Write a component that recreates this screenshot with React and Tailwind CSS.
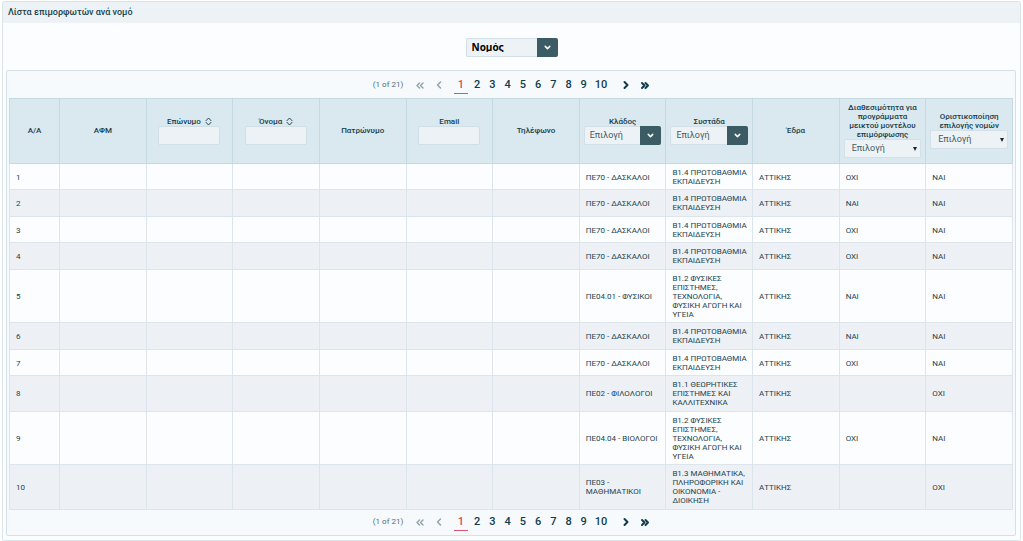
import { ChevronDown, ChevronLeft, ChevronRight, ChevronsLeft, ChevronsRight } from 'lucide-react';

const PRIMARY = 'Β1.4 ΠΡΩΤΟΒΑΘΜΙΑ ΕΚΠΑΙΔΕΥΣΗ';
const SCIENCE = 'Β1.2 ΦΥΣΙΚΕΣ ΕΠΙΣΤΗΜΕΣ, ΤΕΧΝΟΛΟΓΙΑ, ΦΥΣΙΚΗ ΑΓΩΓΗ ΚΑΙ ΥΓΕΙΑ';

const rows = [
  { branch: 'ΠΕ70 - ΔΑΣΚΑΛΟΙ',   cluster: PRIMARY, blended: 'ΟΧΙ', final: 'ΝΑΙ' },
  { branch: 'ΠΕ70 - ΔΑΣΚΑΛΟΙ',   cluster: PRIMARY, blended: 'ΝΑΙ', final: 'ΝΑΙ' },
  { branch: 'ΠΕ70 - ΔΑΣΚΑΛΟΙ',   cluster: PRIMARY, blended: 'ΟΧΙ', final: 'ΝΑΙ' },
  { branch: 'ΠΕ70 - ΔΑΣΚΑΛΟΙ',   cluster: PRIMARY, blended: 'ΟΧΙ', final: 'ΝΑΙ' },
  { branch: 'ΠΕ04.01 - ΦΥΣΙΚΟΙ', cluster: SCIENCE, blended: 'ΝΑΙ', final: 'ΝΑΙ' },
  { branch: 'ΠΕ70 - ΔΑΣΚΑΛΟΙ',   cluster: PRIMARY, blended: 'ΝΑΙ', final: 'ΝΑΙ' },
  { branch: 'ΠΕ70 - ΔΑΣΚΑΛΟΙ',   cluster: PRIMARY, blended: 'ΟΧΙ', final: 'ΝΑΙ' },
  { branch: 'ΠΕ02 - ΦΙΛΟΛΟΓΟΙ',  cluster: 'Β1.1 ΘΕΩΡΗΤΙΚΕΣ ΕΠΙΣΤΗΜΕΣ ΚΑΙ ΚΑΛΛΙΤΕΧΝΙΚΑ', blended: '', final: 'ΟΧΙ' },
  { branch: 'ΠΕ04.04 - ΒΙΟΛΟΓΟΙ', cluster: SCIENCE, blended: 'ΟΧΙ', final: 'ΝΑΙ' },
  { branch: 'ΠΕ03 - ΜΑΘΗΜΑΤΙΚΟΙ', cluster: 'Β1.3 ΜΑΘΗΜΑΤΙΚΑ, ΠΛΗΡΟΦΟΡΙΚΗ ΚΑΙ ΟΙΚΟΝΟΜΙΑ - ΔΙΟΙΚΗΣΗ', blended: '', final: 'ΟΧΙ' },
];

const columns = [
  { id: 'aa',       label: 'Α/Α' },
  { id: 'afm',      label: 'ΑΦΜ' },
  { id: 'surname',  label: 'Επώνυμο', filter: 'text', sortable: true },
  { id: 'name',     label: 'Όνομα', filter: 'text', sortable: true },
  { id: 'father',   label: 'Πατρώνυμο' },
  { id: 'email',    label: 'Email', filter: 'text' },
  { id: 'phone',    label: 'Τηλέφωνο' },
  { id: 'branch',   label: 'Κλάδος', filter: 'menu' },
  { id: 'cluster',  label: 'Συστάδα', filter: 'menu' },
  { id: 'seat',     label: 'Έδρα' },
  { id: 'blended',  label: 'Διαθεσιμότητα για προγράμματα μεικτού μοντέλου επιμόρφωσης', filter: 'select' },
  { id: 'final',    label: 'Οριστικοποίηση επιλογής νομών', filter: 'select' },
];

// ── Menu with dark trigger ────────────────────────────────────────────────────
function MenuSelect({ id, label, ariaLabel, className }) {
  return (
    <div className="flex h-[19px] w-full">
      <select
        id={id}
        aria-label={ariaLabel}
        className={`min-w-0 flex-1 appearance-none rounded-l-xs border border-r-0 border-[#d3dfe7] bg-[#edf2f6] pl-[5px] ${className}`}
      >
        <option>{label}</option>
      </select>
      <span className="pointer-events-none flex w-[21px] items-center justify-center rounded-r-xs bg-[#3c5c65] text-white">
        <ChevronDown size={9} strokeWidth={4} />
      </span>
    </div>
  );
}

// ── Native style select ───────────────────────────────────────────────────────
function PlainSelect({ id }) {
  return (
    <div className="grid h-[19px] w-full items-center">
      <select
        id={id}
        className="col-start-1 row-start-1 h-full w-full appearance-none rounded-xs border border-[#d3e0e8] bg-[#edf2f6] pl-[7px] text-[9px] font-normal text-[#3f5d67]"
      >
        <option>Επιλογή</option>
      </select>
      <svg viewBox="0 0 4 4" className="pointer-events-none col-start-1 row-start-1 mr-1 size-1 justify-self-end">
        <path d="M0 0h4L2 4z" fill="#16282e" />
      </svg>
    </div>
  );
}

// ── Sort icon ─────────────────────────────────────────────────────────────────
function SortIcon() {
  return (
    <svg viewBox="0 0 8 10" className="h-[9px] w-[7px]" fill="none" stroke="#21454f" strokeWidth="1.1">
      <path d="M0.8 4.4 4 1l3.2 3.4M0.8 5.6 4 9l3.2-3.4" />
    </svg>
  );
}

// ── Header cell ───────────────────────────────────────────────────────────────
function HeaderCell({ id, label, filter, sortable }) {
  const fieldId = `filter-${id}`;
  return (
    <th className="border border-[#c5d9e2] px-1 pt-1 pb-[5px] align-middle font-medium">
      {filter ? (
        <div className="flex flex-col items-center">
          <div className="flex items-center justify-center gap-1">
            <label htmlFor={fieldId}>{label}</label>
            {sortable && (
              <button type="button" aria-label={`Ταξινόμηση ${label}`}><SortIcon /></button>
            )}
          </div>
          {filter === 'text' && (
            <input id={fieldId} type="text" className="h-[19px] w-[62px] rounded-xs border border-[#d0dee6] bg-[#edf2f6] px-1" />
          )}
          {filter === 'menu' && <MenuSelect id={fieldId} label="Επιλογή" className="text-[9px] font-normal text-[#3f5d67]" />}
          {filter === 'select' && <PlainSelect id={fieldId} />}
        </div>
      ) : label}
    </th>
  );
}

// ── Paginator ─────────────────────────────────────────────────────────────────
function Paginator({ className }) {
  return (
    <nav aria-label="Σελίδες" className={`flex justify-center pl-[5px] text-[11px] leading-4 font-medium text-[#123c4a] ${className}`}>
      <span className="flex w-6 justify-center text-[8px] font-normal whitespace-nowrap text-[#526b75]">
        (1 of 21)
      </span>
      <button type="button" disabled aria-label="Πρώτη" className="ml-3.5 flex h-4 w-3 items-center justify-center text-[#91a5ad]">
        <ChevronsLeft size={13} strokeWidth={3} />
      </button>
      <button type="button" disabled aria-label="Προηγούμενη" className="mr-[9px] ml-[7px] flex h-4 w-3 items-center justify-center text-[#91a5ad]">
        <ChevronLeft size={12} strokeWidth={3} />
      </button>
      <div className="flex w-[155px] justify-between">
        {[1, 2, 3, 4, 5, 6, 7, 8, 9, 10].map((page) => (
          <button
            key={page}
            type="button"
            aria-current={page === 1 ? 'page' : undefined}
            className={
              page === 1
                ? 'w-3.5 border-b border-[#e0526f] text-[#e0405f]'
                : page === 10
                  ? 'w-4 border-b border-transparent'
                  : 'w-3 border-b border-transparent'
            }
          >
            {page}
          </button>
        ))}
      </div>
      <button type="button" aria-label="Επόμενη" className="ml-[11px] flex h-4 w-3 items-center justify-center">
        <ChevronRight size={12} strokeWidth={4} />
      </button>
      <button type="button" aria-label="Τελευταία" className="ml-[7px] flex h-4 w-3 items-center justify-center">
        <ChevronsRight size={13} strokeWidth={4} />
      </button>
    </nav>
  );
}

// ── Table row ─────────────────────────────────────────────────────────────────
function TrainerRow({ index, row }) {
  const values = [index, '', '', '', '', '', '', row.branch, row.cluster, 'ΑΤΤΙΚΗΣ', row.blended, row.final];
  return (
    <tr className="odd:bg-[#fcfdfe] even:bg-[#edf0f5] odd:*:pb-[3px] even:*:pb-1">
      {values.map((value, i) => (
        <td key={columns[i].id} className="border border-[#dbe5eb] pt-1 pr-1 pl-1.5 align-middle">{value}</td>
      ))}
    </tr>
  );
}

export default function App() {
  return (
    <div className="bg-white px-0.5 pt-px font-['Roboto','Noto_Sans',sans-serif] text-[8px] leading-[9px] text-[#24444f]">
      <main className="rounded-xs border border-[#dae5eb] bg-[#fcfdfe] pb-1">
        <h1 className="bg-[#edf2f6] pt-1.5 pb-1.5 pl-[5px] text-[9px] font-medium text-[#173e4b]">Λίστα επιμορφωτών ανά νομό</h1>
        <div className="mx-auto mt-[15px] w-[92px]">
          <MenuSelect
            id="prefecture"
            label="Νομός"
            ariaLabel="Νομός"
            className="font-['Open_Sans','Noto_Sans',sans-serif] text-[10px] font-bold text-black"
          />
        </div>

        <section className="mt-[13px] mr-1 ml-[3px] rounded-xs border border-[#d6e1e7] bg-[#f6fafd] px-0.5">
          <Paginator className="pt-1.5 pb-1" />
          <table className="w-full table-fixed border-collapse">
            <colgroup>
              <col className="w-[50px]" />
            </colgroup>
            <thead>
              <tr className="bg-[#dae8ef] text-[#173e4b]">
                {columns.map((column) => <HeaderCell key={column.id} {...column} />)}
              </tr>
            </thead>
            <tbody>
              {rows.map((row, i) => <TrainerRow key={i} index={i + 1} row={row} />)}
            </tbody>
          </table>
          <Paginator className="pt-1 pb-1" />
        </section>
      </main>
    </div>
  );
}
